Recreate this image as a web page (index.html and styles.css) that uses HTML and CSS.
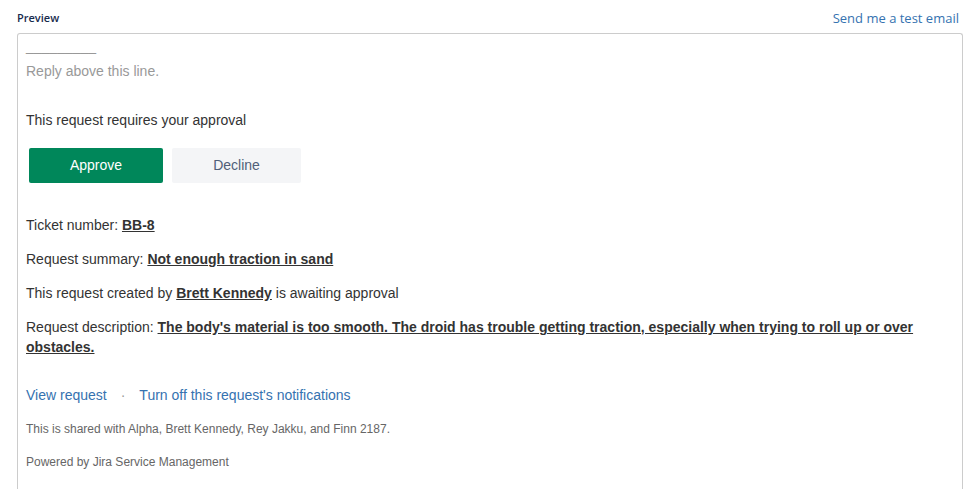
FILE: index.html
```html
<!DOCTYPE html>
<html>
<head>
<meta charset="utf-8">
<link rel="stylesheet" href="styles.css">
</head>
<body>
<div class="header">
  <span class="title">Preview</span>
  <a class="test-link">Send me a test email</a>
</div>
<div class="frame">
  <div class="sep">_________</div>
  <div class="reply">Reply above this line.</div>
  <div class="intro">This request requires your approval</div>
  <div class="actions">
    <span class="btn approve">Approve</span>
    <span class="btn decline">Decline</span>
  </div>
  <p class="row first">Ticket number: <a class="strong">BB-8</a></p>
  <p class="row">Request summary: <a class="strong">Not enough traction in sand</a></p>
  <p class="row">This request created by <a class="strong">Brett Kennedy</a> is awaiting approval</p>
  <p class="row">Request description: <a class="strong">The body's material is too smooth. The droid has trouble getting traction, especially when trying to roll up or over obstacles.</a></p>
  <div class="links"><a class="link">View request</a><span class="dot">·</span><a class="link">Turn off this request's notifications</a></div>
  <p class="small shared">This is shared with Alpha, Brett Kennedy, Rey Jakku, and Finn 2187.</p>
  <p class="small powered">Powered by Jira Service Management</p>
</div>
</body>
</html>
```
FILE: styles.css
```css
html, body { margin: 0; padding: 0; background: #fff; }
body { height: 489px; overflow: hidden; font-family: "Liberation Sans", Arial, sans-serif; }
.header {
  display: flex; justify-content: space-between; align-items: center;
  margin-left: 17px; width: 942px; height: 33px; padding-top: 2px; box-sizing: border-box;
}
.title { font-family: "Open Sans", sans-serif; font-weight: 600; font-size: 11px; color: #172b4d; }
.test-link { font-family: "Open Sans", sans-serif; font-size: 13px; color: #3572b0; }
.frame {
  margin-left: 17px; width: 946px; box-sizing: border-box; height: 470px;
  border: 1px solid #ccc; border-bottom: none; border-radius: 3px 3px 0 0;
  padding: 2px 10px 0 8px; color: #333; font-size: 14px; line-height: 20px;
}
.sep { color: #999; }
.reply { color: #999; margin-top: 5px; }
.intro { margin-top: 29px; }
.actions { display: flex; gap: 9px; margin: 18px 0 0 3px; }
.btn { display: flex; align-items: center; justify-content: center; height: 35px; padding-bottom: 1px; box-sizing: border-box; border-radius: 2px; font-size: 14px; }
.approve { width: 134px; background: #00875a; color: #fff; }
.decline { width: 129px; background: #f4f5f7; color: #505f79; }
.row { margin: 14px 0 0; }
.row.first { margin-top: 32px; }
.strong { font-weight: bold; text-decoration: underline; color: #333; }
.links { margin-top: 28px; color: #3572b0; display: flex; }
.link { color: #3572b0; }
.dot { color: #999; margin: 0 14px 0 14px; }
.small { font-size: 12px; line-height: 16px; color: #666; margin: 0; }
.shared { margin-top: 16px; }
.powered { margin-top: 17px; }
```
